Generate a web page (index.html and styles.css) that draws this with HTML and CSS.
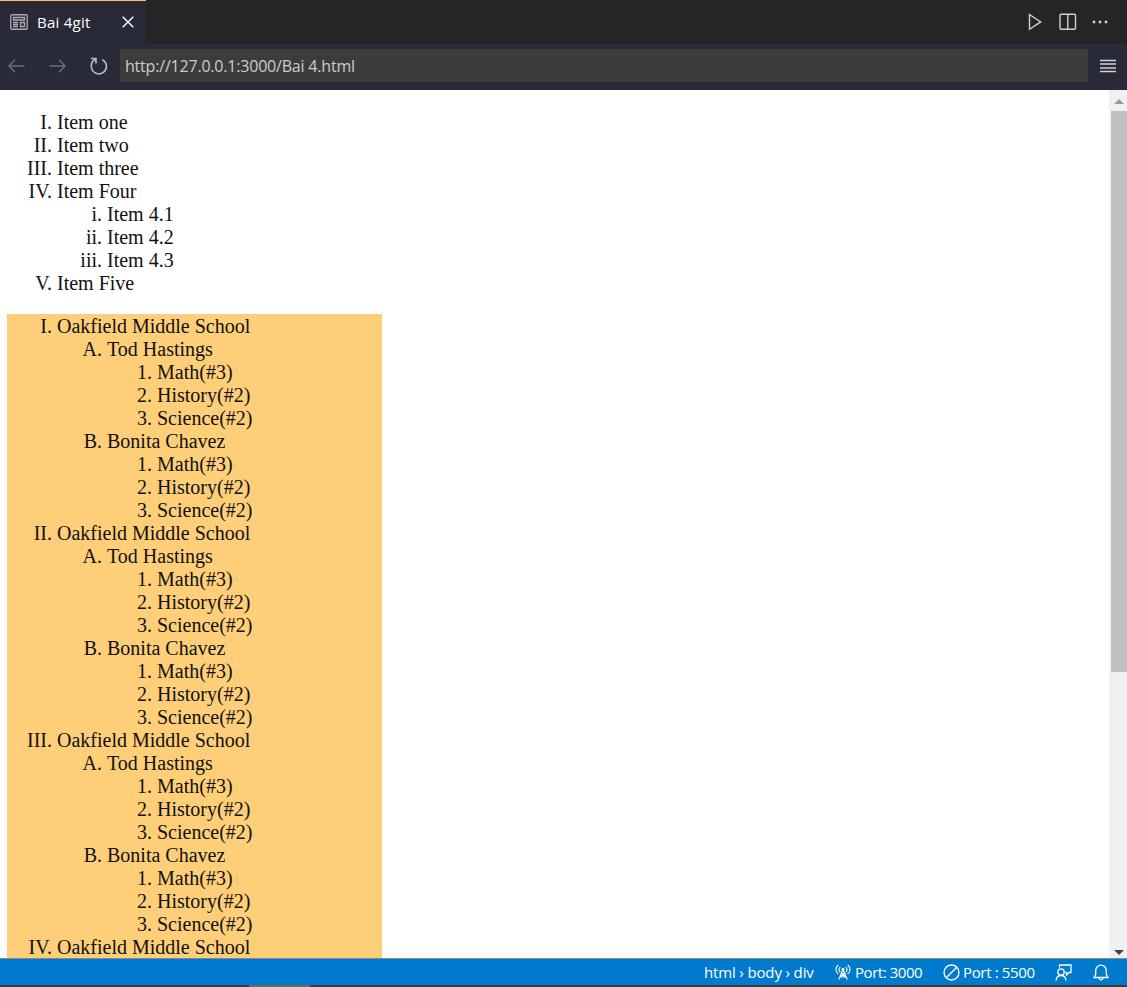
FILE: index.html
```
<!DOCTYPE html>
<html lang="en">
<head>
<meta charset="utf-8">
<title>Bai 4git</title>
<link rel="stylesheet" href="styles.css">
</head>
<body>
<div class="window">
  <header class="tabs">
    <div class="tab">
      <svg class="tab-icon" width="18" height="16" viewBox="0 0 18 16"><rect x=".75" y=".75" width="16.5" height="14.5" rx="1.2"/><path d="M3.5 3.5h11v2.5h-11zM3 8.5h5M3 10.5h5M3 12.5h5M10.5 8.5h4v4h-4z"/></svg>
      <span class="tab-title">Bai 4git</span>
      <svg class="close" width="12" height="12" viewBox="0 0 12 12"><path d="M.7.7l10.6 10.6M11.3.7L.7 11.3"/></svg>
    </div>
    <div class="actions">
      <svg width="14" height="18" viewBox="0 0 14 18"><path d="M1.5 1.5v14.8L12.7 8.9z"/></svg>
      <svg width="18" height="18" viewBox="0 0 18 18"><rect x="1" y="1.2" width="15.500" height="15" rx="1"/><path d="M8.800 1.200v15"/></svg>
      <svg class="dots" width="16" height="4" viewBox="0 0 16 4"><circle cx="2" cy="2" r="1.4"/><circle cx="8" cy="2" r="1.4"/><circle cx="14" cy="2" r="1.4"/></svg>
    </div>
  </header>
  <nav class="toolbar">
    <svg class="dim" width="17" height="14" viewBox="0 0 17 14"><path d="M7 .8L1 7l6 6.200M1 7h15.500"/></svg>
    <svg class="dim" width="17" height="14" viewBox="0 0 17 14"><path d="M10 .8L16 7l-6 6.200M16 7H.5"/></svg>
    <svg class="reload" width="18" height="18" viewBox="0 0 18 18"><path d="M1 1.500h5v5M5.500 2C2 4 .8 7 1.500 10.500a7.500 7.500 0 1 0 10.800-7.800"/></svg>
    <div class="address">http://127.0.0.1:3000/Bai 4.html</div>
    <svg class="menu" width="16" height="14" viewBox="0 0 16 14"><path d="M0 1.500h16M0 5h16M0 9h16M0 12.500h16"/></svg>
  </nav>
  <div class="viewport">
    <main class="page">
      <ol class="roman">
        <li>Item one</li>
        <li>Item two</li>
        <li>Item three</li>
        <li>Item Four
          <ol class="lower">
            <li>Item 4.1</li>
            <li>Item 4.2</li>
            <li>Item 4.3</li>
          </ol>
        </li>
        <li>Item Five</li>
      </ol>
      <div class="schools">
        <ol class="roman">
          <li>Oakfield Middle School
            <ol class="alpha">
              <li>Tod Hastings<ol><li>Math(#3)</li><li>History(#2)</li><li>Science(#2)</li></ol></li>
              <li>Bonita Chavez<ol><li>Math(#3)</li><li>History(#2)</li><li>Science(#2)</li></ol></li>
            </ol>
          </li>
          <li>Oakfield Middle School
            <ol class="alpha">
              <li>Tod Hastings<ol><li>Math(#3)</li><li>History(#2)</li><li>Science(#2)</li></ol></li>
              <li>Bonita Chavez<ol><li>Math(#3)</li><li>History(#2)</li><li>Science(#2)</li></ol></li>
            </ol>
          </li>
          <li>Oakfield Middle School
            <ol class="alpha">
              <li>Tod Hastings<ol><li>Math(#3)</li><li>History(#2)</li><li>Science(#2)</li></ol></li>
              <li>Bonita Chavez<ol><li>Math(#3)</li><li>History(#2)</li><li>Science(#2)</li></ol></li>
            </ol>
          </li>
          <li>Oakfield Middle School</li>
        </ol>
      </div>
    </main>
    <div class="scrollbar">
      <svg class="up" width="10" height="5" viewBox="0 0 10 5"><path d="M0 5L5 0l5 5z"/></svg>
      <div class="thumb"></div>
      <svg class="down" width="10" height="5" viewBox="0 0 10 5"><path d="M0 0l5 5 5-5z"/></svg>
    </div>
  </div>
  <footer class="status">
    <span class="crumbs">html › body › div</span>
    <svg class="tower" width="16" height="16" viewBox="0 0 16 16"><path d="M3.300 1C.2 3.500.2 7.500 3.300 10M12.700 1c3.100 2.500 3.100 6.500 0 9M5.300 2.800c-1.800 1.500-1.800 4 0 5.500M10.700 2.800c1.800 1.500 1.800 4 0 5.500M8 5.500L3.800 15.500M8 5.500l4.200 10M6.500 9.500h3L5 13M6.500 9.500L11 13M5 13h6"/><circle cx="8" cy="5.300" r="1"/></svg>
    <span class="live">Port: 3000</span>
    <svg class="slash" width="17" height="17" viewBox="0 0 17 17"><circle cx="8.500" cy="8.500" r="7.500"/><path d="M13.800 3.200L3.200 13.800"/></svg>
    <span class="port">Port : 5500</span>
    <svg class="feedback" width="17" height="17" viewBox="0 0 17 17"><path d="M4.500 3.500V1H16v7.500h-2l-2.500 2.500V8.500h-1M1 16.500c.3-3 2-5 5-5s4.700 2 5 5"/><circle cx="6" cy="8" r="3.200"/></svg>
    <svg class="bell" width="16" height="17" viewBox="0 0 16 17"><path d="M1 13.500h14l-1.700-3V6.500a5.300 5.300 0 0 0-10.600 0v4zM6 14c.2 2.500 3.800 2.500 4 0"/></svg>
  </footer>
  <div class="edge"><div class="edge-light"></div></div>
</div>
</body>
</html>
```

FILE: styles.css
```
* { box-sizing: border-box; }
body { margin: 0; }
svg { display: block; flex: none; fill: none; stroke: #d0d0d0; stroke-width: 1.4; }
.window {
  width: 1127px; height: 987px; overflow: hidden;
  display: grid; grid-template: 44px 46px 868px 27px 2px / 1127px;
  font: 16px "Open Sans", sans-serif; background: #fff;
}
.tabs { display: flex; justify-content: space-between; background: #252526; }
.tab { width: 146px; display: flex; align-items: center; padding-left: 10px; background: #292a38; border-top: 1px solid #ffb86c; color: #fff; padding-bottom: 1px; }
.tab-icon { stroke: #aaabb0; stroke-width: 1.3; }
.tab-title { width: 76px; margin-left: 9px; margin-right: 9px; font-size: 15px; letter-spacing: .25px; white-space: nowrap; }
.close { stroke: #fff; }
.actions { display: flex; align-items: center; gap: 17px; padding-right: 19px; }
.dots { fill: #d0d0d0; stroke: none; margin-left: -2px; }
.toolbar { display: flex; align-items: center; background: #292a38; padding: 0 11px 3px 8px; }
.dim { stroke: #6d6e77; margin-right: 24px; }
.reload { stroke: #bbb; stroke-width: 1.6; }
.address { width: 968px; height: 33px; margin: 0 auto 0 12px; padding: 1px 0 0 5px; background: #3c3c3c; color: #ccc; line-height: 33px; letter-spacing: -.2px; white-space: nowrap; }
.menu { stroke: #d0d0d0; }
.viewport { display: flex; overflow: hidden; border-bottom: 1px solid #888; height: 869px; }
.page { flex: 1; padding-left: 7px; font: 20px/23px "Liberation Serif", serif; color: #111; }
.page ol { margin: 0; padding-left: 50px; }
.page > ol { margin: 21px 0 19px; }
.roman { list-style: upper-roman; }
.lower { list-style: lower-roman; }
.alpha { list-style: upper-alpha; }
.alpha ol { list-style: decimal; }
.schools { width: 375px; height: 700px; padding-top: 1px; background: #ffce78; }
.scrollbar { width: 18px; background: #f0f0f0; display: flex; flex-direction: column; align-items: center; padding: 9px 0 3px; }
.scrollbar svg { stroke: none; margin-left: 2px; }
.up { fill: #999; }
.scrollbar .down { fill: #444; margin-top: auto; }
.thumb { width: 16px; height: 561px; margin: 7px 0 0 2px; background: #c1c1c1; }
.status { display: flex; align-items: center; margin-top: 1px; background: #007acc; color: #fff; padding-left: 704px; font-size: 15px; white-space: nowrap; }
.status svg { stroke: #fff; stroke-width: 1.3; }
.status .tower { stroke-width: 1.1; }
.crumbs { width: 131px; letter-spacing: -.15px; }
.live { width: 92px; padding-left: 4px; letter-spacing: -.45px; }
.port { width: 95px; padding-left: 3px; letter-spacing: -.35px; }
.feedback { margin-right: 21px; }
.edge { background: #403c3c; padding-left: 249px; }
.edge-light { width: 61px; height: 2px; background: #6a6868; }
```
